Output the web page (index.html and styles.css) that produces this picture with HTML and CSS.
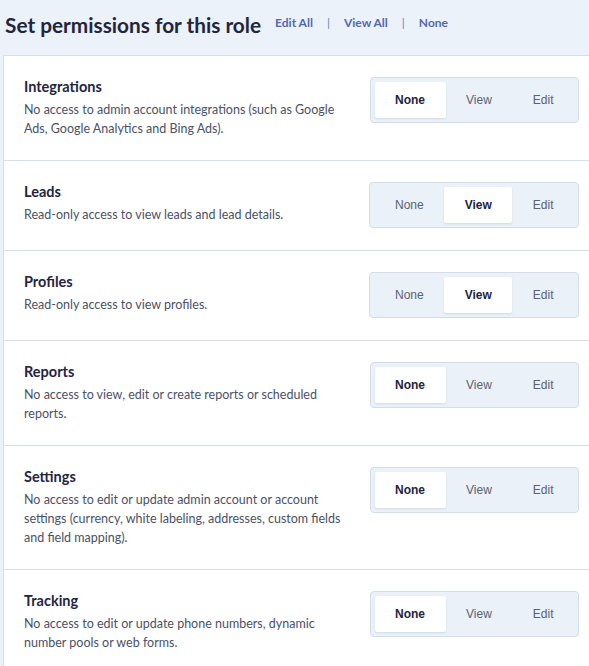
FILE: index.html
```html
<!DOCTYPE html>
<html>
<head>
<meta charset="utf-8">
<link rel="stylesheet" href="styles.css">
</head>
<body>
<div class="page">
  <header class="head">
    <h1 class="title">Set permissions for this role</h1>
    <nav class="bulk">
      <a class="bulk-link">Edit All</a>
      <span class="sep">|</span>
      <a class="bulk-link">View All</a>
      <span class="sep">|</span>
      <a class="bulk-link">None</a>
    </nav>
  </header>
  <section class="card">
    <div class="row">
      <div class="info">
        <div class="name">Integrations</div>
        <div class="desc">No access to admin account integrations (such as Google Ads, Google Analytics and Bing Ads).</div>
      </div>
      <div class="seg"><span class="opt on">None</span><span class="opt">View</span><span class="opt">Edit</span></div>
    </div>
    <div class="row">
      <div class="info">
        <div class="name">Leads</div>
        <div class="desc">Read-only access to view leads and lead details.</div>
      </div>
      <div class="seg"><span class="opt">None</span><span class="opt on">View</span><span class="opt">Edit</span></div>
    </div>
    <div class="row">
      <div class="info">
        <div class="name">Profiles</div>
        <div class="desc">Read-only access to view profiles.</div>
      </div>
      <div class="seg"><span class="opt">None</span><span class="opt on">View</span><span class="opt">Edit</span></div>
    </div>
    <div class="row">
      <div class="info">
        <div class="name">Reports</div>
        <div class="desc">No access to view, edit or create reports or scheduled reports.</div>
      </div>
      <div class="seg"><span class="opt on">None</span><span class="opt">View</span><span class="opt">Edit</span></div>
    </div>
    <div class="row">
      <div class="info">
        <div class="name">Settings</div>
        <div class="desc">No access to edit or update admin account or account settings (currency, white labeling, addresses, custom fields and field mapping).</div>
      </div>
      <div class="seg"><span class="opt on">None</span><span class="opt">View</span><span class="opt">Edit</span></div>
    </div>
    <div class="row">
      <div class="info">
        <div class="name">Tracking</div>
        <div class="desc">No access to edit or update phone numbers, dynamic number pools or web forms.</div>
      </div>
      <div class="seg"><span class="opt on">None</span><span class="opt">View</span><span class="opt">Edit</span></div>
    </div>
  </section>
</div>
</body>
</html>
```
FILE: styles.css
```css
html, body {
  margin: 0;
  padding: 0;
  background: #ecf2f9;
}
.page {
  font-family: "Lato", "Liberation Sans", sans-serif;
  color: #23253f;
}
.head {
  display: flex;
  align-items: flex-start;
  height: 55px;
  box-sizing: border-box;
  padding: 12px 0 0 5px;
}
.title {
  margin: 0;
  font-size: 20.8px;
  line-height: 26px;
  font-weight: 700;
  color: #23253f;
}
.bulk {
  display: flex;
  gap: 14px;
  margin-left: 14px;
  padding-top: 3px;
  font-size: 12px;
  line-height: 16px;
  font-weight: 700;
  color: #5468b0;
}
.sep {
  font-weight: 400;
  color: #6f7fbf;
}
.card {
  margin-left: 3px;
  background: #fff;
  border-left: 1px solid #d6e0eb;
  border-top: 1px solid #d6e0eb;
}
.row {
  display: flex;
  align-items: flex-start;
  justify-content: space-between;
  padding: 21px 10px 22px 20px;
  border-bottom: 1px solid #d6e0eb;
}
.info {
  width: 322px;
}
.name {
  font-size: 14.5px;
  line-height: 20px;
  font-weight: 700;
  color: #23253f;
}
.desc {
  margin-top: 3px;
  font-size: 12.5px;
  line-height: 19px;
  color: #4b5166;
}
.seg {
  display: flex;
  padding: 4px;
  background: #ebf1f8;
  border: 1px solid #d3dde9;
  border-radius: 4px;
}
.opt {
  height: 36px;
  line-height: 36px;
  padding: 0 20.5px;
  font-family: "Liberation Sans", Arial, sans-serif;
  font-size: 12px;
  color: #5b6170;
}
.opt.on {
  background: #fff;
  border-radius: 2px;
  box-shadow: 0 1px 2px rgba(30, 50, 90, 0.12);
  font-weight: 700;
  color: #1f2340;
}
```
